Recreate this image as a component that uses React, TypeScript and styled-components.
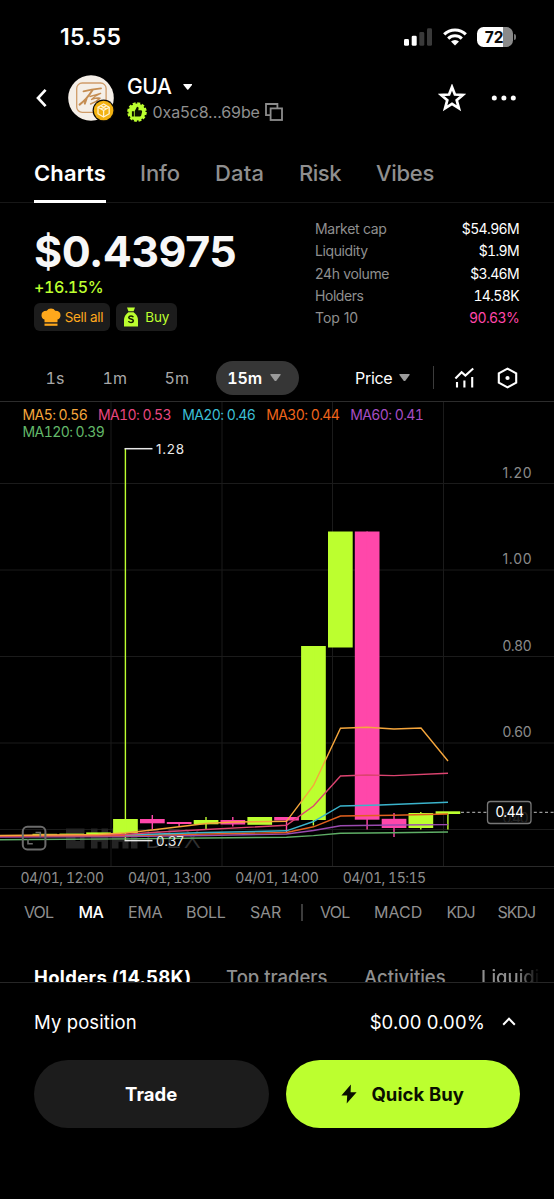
import React from "react";
import styled, { createGlobalStyle } from "styled-components";

const LIME = "#bcff2f";
const PINK = "#ff47aa";
const GREY = "#8f8f8f";
const FONT = 'Inter, "Liberation Sans", sans-serif';

const GlobalStyle = createGlobalStyle`
  * { box-sizing: border-box; }
  body { margin: 0; background: #000; font-family: ${FONT}; color: #fff; }
  svg { display: block; flex: none; }
`;

interface TextProps {
  $size: number;
  $weight?: number;
  $color?: string;
  $spacing?: number;
  $tabular?: boolean;
}

const Text = styled.span<TextProps>`
  font-size: ${(p) => p.$size}px;
  font-weight: ${(p) => p.$weight ?? 400};
  color: ${(p) => p.$color ?? "#fff"};
  letter-spacing: ${(p) => p.$spacing ?? 0}px;
  font-variant-numeric: ${(p) => (p.$tabular ? "tabular-nums" : "normal")};
  white-space: nowrap;
`;

const Screen = styled.main`
  width: 554px;
  height: 1199px;
  display: flex;
  flex-direction: column;
  background: #000;
  overflow: hidden;
`;

const StatusBar = styled.div`
  height: 62px;
  padding: 12px 37.5px 0 60px;
  display: flex;
  align-items: center;
  justify-content: space-between;
`;

const StatusIcons = styled.div`
  display: flex;
  align-items: center;
  gap: 10.5px;
`;

const Battery = styled.div`
  width: 36px;
  height: 20px;
  margin-right: 3.5px;
  padding-right: 1.5px;
  border-radius: 6.5px;
  background: linear-gradient(90deg, #fff 72%, #8a8a8a 72%);
  display: flex;
  align-items: center;
  justify-content: center;
  position: relative;
  &::after {
    content: "";
    position: absolute;
    right: -3px;
    top: 7px;
    width: 2px;
    height: 6px;
    border-radius: 0 2px 2px 0;
    background: #777;
  }
`;

const Header = styled.header`
  height: 72px;
  padding: 0 37.5px 0 34.5px;
  display: flex;
  align-items: center;
`;

const Avatar = styled.div`
  margin-left: 20px;
`;

const TokenInfo = styled.div`
  margin-left: 12.5px;
  padding-top: 2.5px;
  flex: 1;
  display: flex;
  flex-direction: column;
`;

const TokenLine = styled.div<{ $height: number; $gap: number }>`
  height: ${(p) => p.$height}px;
  display: flex;
  align-items: center;
  gap: ${(p) => p.$gap}px;
`;

const HeaderActions = styled.div`
  display: flex;
  align-items: center;
  gap: 25px;
`;

const Tabs = styled.nav`
  height: 69px;
  padding: 8px 0 0 34px;
  display: grid;
  grid-template-columns: 106px 75px 84px 77px auto;
  justify-items: start;
  border-bottom: 1px solid #171717;
`;

const Tab = styled.div<{ $active?: boolean }>`
  height: 61px;
  padding-top: 3px;
  display: flex;
  align-items: center;
  border-bottom: 3px solid ${(p) => (p.$active ? "#fff" : "transparent")};
`;

const Summary = styled.section`
  height: 151px;
  padding: 0 35px 0 34px;
  display: grid;
  grid-template-columns: 281px 1fr;
`;

const PriceColumn = styled.div`
  padding-top: 22px;
  display: flex;
  flex-direction: column;
`;

const PriceLine = styled.div<{ $height: number }>`
  height: ${(p) => p.$height}px;
  display: flex;
  align-items: center;
`;

const Chips = styled.div`
  margin-top: 6px;
  display: flex;
  gap: 6px;
`;

const Chip = styled.div<{ $width: number; $gap: number }>`
  width: ${(p) => p.$width}px;
  height: 28px;
  border-radius: 6px;
  background: #1c1c1c;
  display: flex;
  align-items: center;
  justify-content: center;
  gap: ${(p) => p.$gap}px;
`;

const Stats = styled.div`
  padding-top: 14.7px;
`;

const StatRow = styled.div`
  height: 22.2px;
  display: flex;
  align-items: center;
  justify-content: space-between;
`;

const Toolbar = styled.div`
  height: 48px;
  padding: 0 34.5px 0 45.5px;
  display: flex;
  align-items: center;
  border-bottom: 1px solid #2c2c2c;
`;

const Interval = styled.div<{ $width: number }>`
  width: ${(p) => p.$width}px;
`;

const IntervalPill = styled.div`
  width: 82.5px;
  height: 34px;
  padding-right: 6px;
  border-radius: 17px;
  background: #363636;
  display: flex;
  align-items: center;
  justify-content: center;
  gap: 8px;
`;

const PriceMode = styled.div`
  margin-left: 56.5px;
  display: flex;
  align-items: center;
  gap: 7px;
`;

const Separator = styled.div<{ $height: number; $left: number; $right: number }>`
  width: 1.5px;
  height: ${(p) => p.$height}px;
  margin: 0 ${(p) => p.$right}px 0 ${(p) => p.$left}px;
  background: #3c3c3c;
`;

const ToolbarIcons = styled.div`
  display: flex;
  align-items: center;
  gap: 22px;
`;

const ChartArea = styled.section`
  position: relative;
  height: 465px;
  border-bottom: 1.5px solid #2a2a2a;
`;

const Legend = styled.div`
  position: absolute;
  top: 3.5px;
  left: 22.5px;
  width: 440px;
  display: flex;
  flex-wrap: wrap;
`;

const LegendItem = styled.div<{ $width: number }>`
  width: ${(p) => p.$width}px;
  height: 17px;
  display: flex;
  align-items: center;
`;

const TimeAxis = styled.div`
  height: 22px;
  padding: 0 0 1px 8.3px;
  display: grid;
  grid-template-columns: repeat(4, 107.4px);
  align-items: center;
  justify-items: center;
  border-bottom: 1px solid #1e1e1e;
`;

const Indicators = styled.div`
  height: 46px;
  padding-left: 24px;
  display: flex;
  align-items: center;
`;

const Indicator = styled.div<{ $width: number }>`
  width: ${(p) => p.$width}px;
`;

const ListTabs = styled.div`
  height: 47px;
  padding: 30px 0 0 34px;
  display: grid;
  grid-template-columns: 192px 138px 117px 60px;
  overflow: hidden;
`;

const ListTab = styled.div`
  height: 24px;
  display: flex;
  align-items: center;
`;

const FadedTab = styled(ListTab)`
  overflow: hidden;
  mask-image: linear-gradient(90deg, #000 60%, transparent 98%);
`;

const Footer = styled.footer`
  flex: 1;
  padding: 0 34px;
  background: #000;
  border-top: 1px solid #262626;
`;

const PositionRow = styled.div`
  height: 77px;
  display: flex;
  align-items: center;
  justify-content: space-between;
`;

const PositionValue = styled.div`
  display: flex;
  align-items: center;
  gap: 17px;
  padding-right: 4px;
`;

const Buttons = styled.div`
  display: grid;
  grid-template-columns: 1fr 1fr;
  gap: 17px;
`;

const ActionButton = styled.button<{ $primary?: boolean }>`
  height: 68px;
  border: 0;
  padding: 0;
  border-radius: 34px;
  font-family: inherit;
  background: ${(p) => (p.$primary ? LIME : "#1c1c1c")};
  display: flex;
  align-items: center;
  justify-content: center;
  gap: 14px;
`;

const Caret = ({ w, h, color }: { w: number; h: number; color: string }) => (
  <svg width={w} height={h} viewBox="0 0 10 7" preserveAspectRatio="none">
    <path d="M.8 0H9.2Q10 .3 9.6 1L5.6 6.5Q5 7.1 4.4 6.5L.4 1Q0 .3.8 0Z" fill={color} />
  </svg>
);

const SignalIcon = () => (
  <svg width="28" height="18" viewBox="0 0 28 18">
    <rect x="0" y="11" width="5" height="6.8" rx="1.4" fill="#fff" />
    <rect x="7.7" y="7.7" width="5" height="10.1" rx="1.4" fill="#fff" />
    <rect x="15.3" y="4" width="5" height="13.8" rx="1.4" fill="#3a3a3a" />
    <rect x="23" y="0.2" width="5" height="17.6" rx="1.4" fill="#3a3a3a" />
  </svg>
);

const WifiIcon = () => (
  <svg width="24" height="18" viewBox="0 0 24 18">
    <g fill="none" stroke="#fff" strokeWidth="3.1">
      <path d="M1.2 6.4a15.4 15.4 0 0 1 21.6 0" />
      <path d="M5.2 10.6a9.7 9.7 0 0 1 13.6 0" />
    </g>
    <path d="M12 17.6L8 13.6a5.7 5.7 0 0 1 8 0Z" fill="#fff" />
  </svg>
);

const BackIcon = () => (
  <svg width="13" height="20" viewBox="0 0 13 20">
    <path d="M10.6 1.8L3 10l7.6 8.2" fill="none" stroke="#fff" strokeWidth="2.7" />
  </svg>
);

const TokenAvatar = () => (
  <svg width="47" height="48" viewBox="0 0 47 48">
    <circle cx="23" cy="24" r="22.8" fill="#f5efe8" />
    <rect x="8.7" y="9" width="29.4" height="29.4" rx="5.5" fill="none" stroke="#cf9c69" strokeWidth="1.3" />
    <g fill="none" stroke="#c58d52" strokeLinecap="round" strokeLinejoin="round">
      <path d="M15.5 17.4Q23 15.6 33 14.4" strokeWidth="1.9" />
      <path d="M24.5 16Q19 25 11.6 30.6M18.6 24.400L16.800 29.600" strokeWidth="2" />
      <path d="M22 22.400Q28 21 32.600 19.400Q27 21.600 23.600 25.400Q28 23.800 32 24.200Q29 27.400 22.600 30" strokeWidth="1.500" />
    </g>
    <circle cx="35.6" cy="36.5" r="11" fill="#0b0905" />
    <circle cx="35.6" cy="36.5" r="9.8" fill="#f2b211" />
    <g fill="none" stroke="#fff3cf" strokeWidth="1.3" strokeLinejoin="round">
      <path d="M35.6 30l5.6 3.2v6.6l-5.6 3.2-5.6-3.2v-6.6Z" />
      <path d="M30 33.2l5.6 3.3 5.6-3.3M35.6 36.5V43M32.8 31.6l5.6 3.4M38.4 31.6L32.8 35" />
    </g>
  </svg>
);

const VerifiedIcon = () => (
  <svg width="20" height="20" viewBox="0 0 20 20">
    <circle cx="10" cy="10" r="8.6" fill={LIME} />
    <circle cx="10" cy="10" r="8.7" fill="none" stroke={LIME} strokeWidth="2.2" strokeDasharray="2.9 1.655" />
    <path d="M4.900 9.200h2v5.200H4.900ZM7.700 9.200l2.300-4.400q2-.1 1.600 2l-.4 1.500h2.900q1.200.2 1 1.400l-.9 3.700q-.3 1-1.400 1H7.700Z" fill="#0c1200" />
  </svg>
);

const CopyIcon = () => (
  <svg width="18" height="18" viewBox="0 0 18 18" fill="none" stroke="#8c8c8c" strokeWidth="1.8">
    <path d="M5.2 12.2H1V1h11.4v4" />
    <rect x="5.6" y="5.4" width="11.4" height="11.6" />
  </svg>
);

const StarIcon = () => (
  <svg width="28" height="28" viewBox="0 0 28 28">
    <path
      d="M14 3L16.900 10.500L24.800 11L18.700 16.200L20.900 24.300L14 19.800L7.100 24.300L9.300 16.200L3.200 11L11.100 10.500Z"
      fill="none"
      stroke="#fff"
      strokeWidth="2.7"
    />
  </svg>
);

const MoreIcon = () => (
  <svg width="26" height="6" viewBox="0 0 26 6" fill="#fff">
    <circle cx="3.3" cy="3" r="2.5" />
    <circle cx="12.9" cy="3" r="2.5" />
    <circle cx="22.3" cy="3" r="2.5" />
  </svg>
);

const ChefHatIcon = () => (
  <svg width="20" height="19" viewBox="0 0 20 19" fill="#ffa81c">
    <path d="M10 .6q3 0 4.200 2.100q5.300-.1 5.300 4.500q0 3.200-3 4.400V14.200H3.500v-2.600q-3-1.200-3-4.400q0-4.600 5.300-4.500Q7 .6 10 .6Z" />
    <rect x="3.5" y="15.600" width="13" height="2.2" />
  </svg>
);

const MoneyBagIcon = () => (
  <svg width="16" height="20" viewBox="0 0 16 20">
    <path d="M4 .6h8L10.600 4.200H5.400Z" fill={LIME} />
    <path d="M5.400 5.200h5.200q4.400 3 4.400 8v6.200H1v-6.200q0-5 4.400-8Z" fill={LIME} />
    <path
      d="M10.300 10.300q-.4-1.300-2.300-1.300t-2.200 1.400q0 1.300 2.200 1.700t2.400 1.800q-.2 1.600-2.400 1.600t-2.400-1.500"
      fill="none"
      stroke="#141c00"
      strokeWidth="1.5"
    />
  </svg>
);

const IndicatorIcon = () => (
  <svg width="21" height="22" viewBox="0 0 21 22" fill="none" stroke="#fff" strokeWidth="2.1">
    <path d="M1.400 11.400L7.600 5.200l3.800 3.400L19.200 1.500" />
    <path d="M3 15v5.600M10.400 13.500v7.100M18.200 10v10.600" />
  </svg>
);

const HexIcon = () => (
  <svg width="21" height="22" viewBox="0 0 21 22">
    <path d="M10.500 1.600l8.700 4.700v9.400l-8.700 4.700-8.700-4.700V6.300Z" fill="none" stroke="#fff" strokeWidth="2.100" />
    <circle cx="10.500" cy="11" r="2.100" fill="#fff" />
  </svg>
);

const BoltIcon = () => (
  <svg width="16" height="20" viewBox="0 0 16 20">
    <path d="M9.900.4L.4 11.400H6.200L5.700 19.600L15.600 8.200H9.600Z" fill="#0a0f00" />
  </svg>
);

const ChevronUp = () => (
  <svg width="14" height="9" viewBox="0 0 14 9">
    <path d="M1.200 7.800L7 1.800l5.800 6" fill="none" stroke="#fff" strokeWidth="2" />
  </svg>
);

const tabs = [
  { label: "Charts", weight: 600, color: "#fff", spacing: 0.15 },
  { label: "Info", weight: 500, color: GREY, spacing: -0.1 },
  { label: "Data", weight: 500, color: GREY, spacing: 0.2 },
  { label: "Risk", weight: 500, color: GREY, spacing: -0.5 },
  { label: "Vibes", weight: 500, color: GREY, spacing: -0.3 },
];

const stats = [
  { label: "Market cap", value: "$54.96M", spacing: -0.3 },
  { label: "Liquidity", value: "$1.9M", spacing: -0.4 },
  { label: "24h volume", value: "$3.46M", spacing: -0.35 },
  { label: "Holders", value: "14.58K", spacing: -0.45 },
  { label: "Top 10", value: "90.63%", spacing: -0.05, color: PINK },
];

const legend = [
  { label: "MA5: 0.56", color: "#f5a63c", width: 75.4 },
  { label: "MA10: 0.53", color: "#e8467f", width: 84.3 },
  { label: "MA20: 0.46", color: "#3bbfd6", width: 84 },
  { label: "MA30: 0.44", color: "#f0651c", width: 84 },
  { label: "MA60: 0.41", color: "#a64dc4", width: 84 },
  { label: "MA120: 0.39", color: "#63b86a", width: 90 },
];

const candles = [
  { x: 44.8, top: 833.8, bottom: 835.2, up: true },
  { x: 71.7, top: 833.6, bottom: 835.2, up: true },
  { x: 98.5, top: 832.4, bottom: 834.4, up: true },
  { x: 125.4, top: 819, bottom: 833, high: 449, low: 840, up: true },
  { x: 152.3, top: 819, bottom: 823.3, high: 815, low: 829, up: false },
  { x: 179.1, top: 822, bottom: 824, high: 822, low: 826.5, up: false },
  { x: 206, top: 820, bottom: 824.3, high: 817, low: 829.5, up: true },
  { x: 232.8, top: 820, bottom: 824.5, high: 817, low: 826.5, up: false },
  { x: 259.7, top: 817, bottom: 824.8, up: true },
  { x: 286.5, top: 817, bottom: 820.5, high: 817, low: 832, up: false },
  { x: 313.4, top: 646, bottom: 820, high: 646, low: 825.5, up: true },
  { x: 340.3, top: 531.5, bottom: 647.5, up: true },
  { x: 367.1, top: 531.5, bottom: 819.7, high: 531.5, low: 829.5, up: false },
  { x: 394, top: 818.8, bottom: 828, high: 813, low: 837, up: false },
  { x: 420.8, top: 813, bottom: 828, high: 812, low: 829.5, up: true },
  { x: 447.9, top: 811.3, bottom: 814, high: 812, low: 829.5, up: true },
];

const averages = [
  { color: "#5fae66", points: "0,839.7 125,838.9 206,838 286.5,837.2 313.5,835.6 340.5,833.2 394,832.7 448,832" },
  { color: "#9a4ab0", points: "0,837 125,836.5 206,835.5 286.5,834 313.5,830.5 340.5,825.8 394,825 448,824.6" },
  { color: "#e2611f", points: "0,836 125,835.5 206,834 286.5,832.5 313.5,826.8 340.5,816 394,815.3 448,814" },
  { color: "#3bb4cc", points: "125,835 206,832.5 286.5,830.8 313.5,821.5 340.5,806 380,805 448,802.3" },
  { color: "#dc4470", points: "0,836 125,834.5 152,832.5 206,829.5 286.5,825.3 313.5,806 340.5,776 367,775 394,775.6 448,773.3" },
  { color: "#f5a63c", points: "0,835.5 98,834.5 125,833 152,830 206,823.5 233,822 286.5,821.3 313.5,785.5 340.5,728.3 367,727.3 394,729 421,728 448,761" },
];

const priceTicks = [
  { label: "1.20", y: 483.5 },
  { label: "1.00", y: 570 },
  { label: "0.80", y: 656.5 },
  { label: "0.60", y: 743 },
];

const Watermark = () => (
  <g fill="#242424">
    <path fillRule="evenodd" d="M66 828.5h18.5v20H66ZM75.5 835h4.5v6h-4.5Z" />
    <path d="M91 828.5h6.5v6.7h4v-6.7h6.5v20h-6.5v-6.7h-4v6.7H91Z" />
    <path d="M112 828.5h6.5v6.7h4v-6.7h6v20h-6v-6.7h-4v6.7H112Z" />
    <path d="M131 828.5h6.5v20H131Z" />
    <text x="145" y="848" fontSize="26" fontWeight="300" fill="#303030" textLength="56">
      DEX
    </text>
  </g>
);

const Chart = () => (
  <svg width="554" height="464" viewBox="0 402 554 464" fontFamily={FONT}>
    <g stroke="#1b1b1b" strokeWidth="1">
      {[111, 222, 332.5, 443.5].map((x) => (
        <line key={x} x1={x} x2={x} y1="402" y2="866" />
      ))}
      {[483.5, 570, 656.5, 743, 829.5].map((y) => (
        <line key={y} x1="0" x2="554" y1={y} y2={y} />
      ))}
    </g>
    <Watermark />
    <g fontSize="14" fill="#8a8a8a">
      {priceTicks.map((t) => (
        <text key={t.label} x="502.5" y={t.y - 6} textLength="29">
          {t.label}
        </text>
      ))}
    </g>
    {candles.map((c) => {
      const fill = c.up ? LIME : PINK;
      return (
        <g key={c.x} fill={fill}>
          <rect x={c.x - 12.3} y={c.top} width="24.7" height={c.bottom - c.top} />
          {c.low !== undefined && c.high !== undefined && (
            <rect x={c.x - 0.7} y={c.high} width="1.4" height={c.low - c.high} />
          )}
        </g>
      );
    })}
    {averages.map((a) => (
      <polyline key={a.color} points={a.points} fill="none" stroke={a.color} strokeWidth="1.4" />
    ))}
    <g stroke="#e8e8e8" strokeWidth="1.5">
      <line x1="124.5" x2="152.5" y1="448.7" y2="448.7" />
      <line x1="124.5" x2="152.5" y1="840.6" y2="840.6" />
    </g>
    <g fontSize="13.5" fill="#e8e8e8">
      <text x="156" y="454" textLength="28">1.28</text>
      <text x="156" y="845.8" textLength="28">0.37</text>
    </g>
    <line x1="461" x2="554" y1="812.3" y2="812.3" stroke="#9a9a9a" strokeWidth="1.2" strokeDasharray="3 2.6" />
    <rect x="487.5" y="801.5" width="43.5" height="22" rx="3" fill="#080808" stroke="#777" strokeWidth="1.3" />
    <text x="502.5" y="822.5" fontSize="14" fill="#252525" textLength="26">0.40</text>
    <text x="495.5" y="817.3" fontSize="14" fill="#fff" textLength="28.5">0.44</text>
    <g fill="none" stroke="#6b6b6b">
      <rect x="22.8" y="826.8" width="22.6" height="22.6" rx="4.5" strokeWidth="2" />
      <path d="M35.500 832.500h4.800v4.800M28 839v4.800h4.800" strokeWidth="1.6" />
    </g>
  </svg>
);

const leftIndicators = [
  { label: "VOL", width: 54.5, spacing: -0.9 },
  { label: "MA", width: 49.5, spacing: -0.6, active: true },
  { label: "EMA", width: 58, spacing: -0.25 },
  { label: "BOLL", width: 64, spacing: -0.3 },
  { label: "SAR", width: 51, spacing: -0.2 },
];

const rightIndicators = [
  { label: "VOL", width: 54, spacing: -0.7 },
  { label: "MACD", width: 72.5, spacing: 0.05 },
  { label: "KDJ", width: 51, spacing: -1.1 },
  { label: "SKDJ", width: 50, spacing: -1 },
];

export default function App() {
  return (
    <>
      <GlobalStyle />
      <Screen>
        <StatusBar>
          <Text $size={23} $weight={600} $spacing={0.3}>15.55</Text>
          <StatusIcons>
            <SignalIcon />
            <WifiIcon />
            <Battery>
              <Text $size={15.5} $weight={700} $color="#0a0a0a">72</Text>
            </Battery>
          </StatusIcons>
        </StatusBar>

        <Header>
          <BackIcon />
          <Avatar>
            <TokenAvatar />
          </Avatar>
          <TokenInfo>
            <TokenLine $height={26} $gap={11}>
              <Text $size={21} $weight={500} $spacing={-0.4}>GUA</Text>
              <Caret w={9.5} h={6} color="#fff" />
            </TokenLine>
            <TokenLine $height={25} $gap={5.5}>
              <VerifiedIcon />
              <Text $size={16} $color={GREY} $spacing={-0.1}>0xa5c8...69be</Text>
              <CopyIcon />
            </TokenLine>
          </TokenInfo>
          <HeaderActions>
            <StarIcon />
            <MoreIcon />
          </HeaderActions>
        </Header>

        <Tabs>
          {tabs.map((t, i) => (
            <Tab key={t.label} $active={i === 0}>
              <Text $size={22} $weight={t.weight} $color={t.color} $spacing={t.spacing}>{t.label}</Text>
            </Tab>
          ))}
        </Tabs>

        <Summary>
          <PriceColumn>
            <PriceLine $height={52}>
              <Text $size={43} $weight={700} $color="#f7f7f7" $spacing={-0.5}>$0.43975</Text>
            </PriceLine>
            <PriceLine $height={20}>
              <Text $size={16} $weight={500} $color={LIME} $spacing={-0.4} $tabular>+16.15%</Text>
            </PriceLine>
            <Chips>
              <Chip $width={76} $gap={4}>
                <ChefHatIcon />
                <Text $size={13.5} $color="#ffa81c" $spacing={-0.29}>Sell all</Text>
              </Chip>
              <Chip $width={60.5} $gap={6}>
                <MoneyBagIcon />
                <Text $size={13.5} $color={LIME} $spacing={-0.2}>Buy</Text>
              </Chip>
            </Chips>
          </PriceColumn>
          <Stats>
            {stats.map((s) => (
              <StatRow key={s.label}>
                <Text $size={14} $color={GREY} $spacing={s.spacing}>{s.label}</Text>
                <Text $size={14} $color={s.color} $spacing={-0.65} $tabular>{s.value}</Text>
              </StatRow>
            ))}
          </Stats>
        </Summary>

        <Toolbar>
          <Interval $width={57}><Text $size={16} $color="#a8a8a8" $tabular>1s</Text></Interval>
          <Interval $width={62}><Text $size={16} $color="#a8a8a8" $tabular>1m</Text></Interval>
          <Interval $width={51.5}><Text $size={16} $color="#a8a8a8" $tabular>5m</Text></Interval>
          <IntervalPill>
            <Text $size={16} $weight={600} $spacing={-0.1} $tabular>15m</Text>
            <Caret w={11} h={7.5} color="#9b9b9b" />
          </IntervalPill>
          <PriceMode>
            <Text $size={16} $spacing={-0.3}>Price</Text>
            <Caret w={11} h={7.5} color="#9b9b9b" />
          </PriceMode>
          <Separator $height={23} $left={22.5} $right={20} />
          <ToolbarIcons>
            <IndicatorIcon />
            <HexIcon />
          </ToolbarIcons>
        </Toolbar>

        <ChartArea>
          <Chart />
          <Legend>
            {legend.map((l) => (
              <LegendItem key={l.label} $width={l.width}>
                <Text $size={14} $color={l.color} $spacing={-0.58} $tabular>{l.label}</Text>
              </LegendItem>
            ))}
          </Legend>
        </ChartArea>

        <TimeAxis>
          {["04/01, 12:00", "04/01, 13:00", "04/01, 14:00", "04/01, 15:15"].map((t) => (
            <Text key={t} $size={14} $color={GREY} $spacing={-0.5} $tabular>{t}</Text>
          ))}
        </TimeAxis>

        <Indicators>
          {leftIndicators.map((n) => (
            <Indicator key={n.label} $width={n.width}>
              <Text $size={16} $weight={n.active ? 500 : 400} $color={n.active ? "#fff" : GREY} $spacing={n.spacing}>{n.label}</Text>
            </Indicator>
          ))}
          <Separator $height={17} $left={0} $right={17.5} />
          {rightIndicators.map((n) => (
            <Indicator key={n.label} $width={n.width}>
              <Text $size={16} $color={GREY} $spacing={n.spacing}>{n.label}</Text>
            </Indicator>
          ))}
        </Indicators>

        <ListTabs>
          <ListTab><Text $size={18.5} $weight={700} $spacing={0.33}>Holders (14.58K)</Text></ListTab>
          <ListTab><Text $size={18.5} $weight={500} $color={GREY}>Top traders</Text></ListTab>
          <ListTab><Text $size={18.5} $weight={500} $color={GREY}>Activities</Text></ListTab>
          <FadedTab><Text $size={18.5} $weight={500} $color={GREY}>Liquidity</Text></FadedTab>
        </ListTabs>

        <Footer>
          <PositionRow>
            <Text $size={18.5} $spacing={0.1}>My position</Text>
            <PositionValue>
              <Text $size={18.5} $spacing={0.12}>$0.00 0.00%</Text>
              <ChevronUp />
            </PositionValue>
          </PositionRow>
          <Buttons>
            <ActionButton>
              <Text $size={18.5} $weight={700} $spacing={0.05}>Trade</Text>
            </ActionButton>
            <ActionButton $primary>
              <BoltIcon />
              <Text $size={18.5} $weight={700} $color="#0a0f00" $spacing={0.1}>Quick Buy</Text>
            </ActionButton>
          </Buttons>
        </Footer>
      </Screen>
    </>
  );
}
